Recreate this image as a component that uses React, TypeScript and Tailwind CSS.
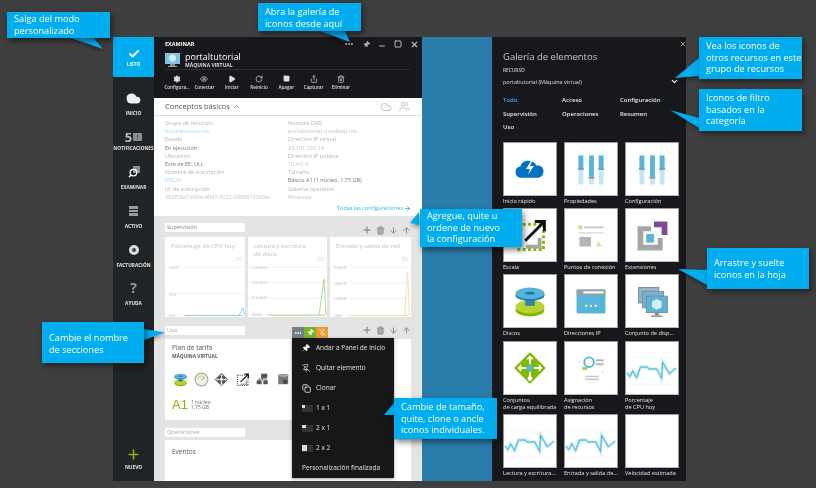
import React from "react";
import { Settings, Eye, Play, RotateCw, Square, Share, Trash2, Plus, ArrowDown, ArrowUp, Pin, PinOff, Copy, X, Minus, ChevronUp, ChevronDown, Check, ArrowRight, Users, Cloud, Search, MoreHorizontal } from "lucide-react";

const Spark = () => (
  <svg viewBox="0 0 54 54" className="w-full h-full">
    <line x1="0" y1="16" x2="54" y2="16" stroke="#eef3f5" strokeWidth="0.6" />
    <line x1="0" y1="44" x2="54" y2="44" stroke="#eef3f5" strokeWidth="0.6" />
    <polyline points="1,32 4,36 7,30 11,37 15,26 22,26 24,28 32,28 37,38 38,21 45,33 52,27" fill="none" stroke="#bfe8f5" strokeWidth="3" />
    <polyline points="1,32 4,36 7,30 11,37 15,26 22,26 24,28 32,28 37,38 38,21 45,33 52,27" fill="none" stroke="#3fb3d3" strokeWidth="1" />
  </svg>
);

const Quick = () => (
  <svg viewBox="0 0 54 54" className="w-full h-full">
    <path d="M18 36c-4 0-6-3-6-6s2-5 5-5.500c1-4 4-6 8-6 4 0 7 2 9 5 4-1 7 2 7 6 0 4-3 6.500-6 6.500z" fill="#0072c6" />
    <path d="M29 17l-6 10h4l-2 6 6-9h-4l3-7z" fill="#fff" />
  </svg>
);

const Sliders = () => (
  <svg viewBox="0 0 54 54" className="w-full h-full">
    {[[14, 26], [25, 35], [35, 26]].map(([x, h]) => (
      <g key={x}>
        <rect x={x} y="13" width="5" height="30" fill="#c4e6f5" />
        <rect x={x} y="13" width="5" height={h - 13} fill="#59b4d9" />
        <rect x={x - 0.5} y={h} width="6" height="2" fill="#8a9aa2" />
      </g>
    ))}
  </svg>
);

const ScaleIcon = ({ mono = false }: { mono?: boolean }) => (
  <svg viewBox="0 0 54 54" className="w-full h-full">
    <rect x="14" y="16" width="27" height="26" fill="none" stroke={mono ? "#555" : "#7fba00"} strokeWidth="3" strokeDasharray="3 2.500" />
    <path d="M37 30v9H23" fill="none" stroke="#a5a5a5" strokeWidth="4" />
    <path d="M22 33L42 13M32 13h10v10" fill="none" stroke="#111" strokeWidth="3" />
  </svg>
);

const Points = () => (
  <svg viewBox="0 0 54 54" className="w-full h-full">
    <rect x="14" y="17" width="4" height="4" fill="#c8dc96" />
    <rect x="20" y="18" width="20" height="2" fill="#c9c9c9" />
    <rect x="14" y="24" width="26" height="1.500" fill="#dddddd" />
    <rect x="15" y="29" width="12" height="10" fill="#b5b5b5" />
    <path d="M32 39l3-6 3 6z" fill="#d4e2a8" />
  </svg>
);

const Ext = () => (
  <svg viewBox="0 0 54 54" className="w-full h-full">
    <path d="M12 18h14v5h-8v14h15v-7h5v13H12z" fill="#a5a5a5" />
    <path d="M29 13h14v14h-6v-8h-8z" fill="#804998" />
    <rect x="21" y="26" width="8" height="9" fill="#59b4d9" />
  </svg>
);

const Disks = () => (
  <svg viewBox="0 0 54 54" className="w-full h-full">
    <ellipse cx="27" cy="36" rx="15" ry="7" fill="#7fba00" />
    <ellipse cx="27" cy="33" rx="15" ry="7" fill="#b8d432" />
    <rect x="22" y="22" width="10" height="10" fill="#3a7fb0" />
    <ellipse cx="27" cy="21" rx="15" ry="6" fill="#1f78b4" />
    <ellipse cx="27" cy="19" rx="15" ry="6" fill="#59b4d9" />
    <ellipse cx="27" cy="19" rx="5" ry="1.500" fill="#1f78b4" />
  </svg>
);

const IpWin = () => (
  <svg viewBox="0 0 54 54" className="w-full h-full">
    <rect x="12" y="15" width="30" height="25" rx="1.500" fill="#59b4d9" />
    <rect x="12" y="15" width="30" height="6" rx="1" fill="#a0a1a2" />
    <circle cx="15" cy="18" r="1.500" fill="#59b4d9" />
    <rect x="19" y="17" width="21" height="2" fill="#fff" />
    <circle cx="22" cy="32" r="1.200" fill="#fff" />
    <circle cx="27" cy="32" r="1.200" fill="#fff" />
    <circle cx="32" cy="32" r="1.200" fill="#fff" />
  </svg>
);

const Monitors = () => (
  <svg viewBox="0 0 54 54" className="w-full h-full">
    <rect x="13" y="13" width="21" height="16" fill="#8fb8cf" stroke="#8a8a8a" />
    <rect x="17" y="17" width="22" height="17" fill="#74b2d4" stroke="#8a8a8a" />
    <rect x="21" y="22" width="22" height="17" fill="#59b4d9" stroke="#8a8a8a" />
    <path d="M32 25l5 2.500v6l-5 2.500-5-2.500v-6z" fill="#d8eff8" />
    <rect x="30" y="39" width="4" height="3" fill="#8a8a8a" />
    <rect x="26" y="42" width="12" height="1.500" fill="#8a8a8a" />
  </svg>
);

const Diamond = ({ mono = false }: { mono?: boolean }) => (
  <svg viewBox="0 0 54 54" className="w-full h-full">
    <path d="M27 12l15 15-15 15-15-15z" fill={mono ? "#5a5a5a" : "#7fba00"} stroke={mono ? "#5a5a5a" : "#7fba00"} strokeWidth="2" strokeLinejoin="round" />
    <path d="M27 15v8M27 31v8M15 27h8M31 27h8" stroke="#fff" strokeWidth="2" />
    <path d="M24 18l3-3 3 3M18 24l-3 3 3 3M36 24l3 3-3 3" fill="none" stroke="#fff" strokeWidth="1.500" />
    <circle cx="27" cy="38" r="2.500" fill="#fff" />
    <circle cx="27" cy="27" r="3.500" fill={mono ? "#fff" : "#59b4d9"} />
  </svg>
);

const Assign = () => (
  <svg viewBox="0 0 54 54" className="w-full h-full">
    <circle cx="25" cy="21" r="5" fill="none" stroke="#59b4d9" strokeWidth="2" />
    <rect x="32" y="18" width="8" height="2" fill="#b5b5b5" />
    <rect x="32" y="22" width="8" height="2" fill="#b5b5b5" />
    <rect x="18" y="26" width="5" height="3" fill="#a5ce60" />
    <rect x="21" y="35" width="14" height="1.500" fill="#c5c5c5" />
    <rect x="21" y="38" width="14" height="1.500" fill="#c5c5c5" />
    <circle cx="15" cy="21" r="0.800" fill="#ccc" />
    <circle cx="39" cy="32" r="0.800" fill="#ccc" />
  </svg>
);

const Gauge = () => (
  <svg viewBox="0 0 54 54" className="w-full h-full">
    <circle cx="27" cy="27" r="23" fill="#f3f0e2" stroke="#a8a8a8" strokeWidth="4" />
    <path d="M14 27a13 13 0 0 1 26 0" fill="none" stroke="#c7d36c" strokeWidth="3" />
    <path d="M27 29l9-10" stroke="#555" strokeWidth="2" />
  </svg>
);

const Net = () => (
  <svg viewBox="0 0 54 54" className="w-full h-full">
    <rect x="22" y="6" width="22" height="16" fill="#555" />
    <rect x="6" y="30" width="18" height="14" fill="#555" />
    <rect x="30" y="30" width="16" height="14" fill="#555" />
    <path d="M27 22v8M14 30v-5h26v5" fill="none" stroke="#555" strokeWidth="3" />
  </svg>
);

const Db = () => (
  <svg viewBox="0 0 54 54" className="w-full h-full">
    <path d="M8 12c0-6 36-6 36 0v32H8z" fill="#777" />
    <ellipse cx="26" cy="13" rx="18" ry="5" fill="#a5a5a5" />
    <rect x="26" y="28" width="14" height="14" fill="#444" />
  </svg>
);

const Sizer = ({ n }: { n: number }) => (
  <svg width="11" height="7" viewBox="0 0 11 7">
    <rect x="0" y="0" width="11" height="7" fill="#333" />
    <rect x="0" y="0" width={n === 1 ? 3 : n === 2 ? 4 : 5} height={n === 3 ? 6 : 3} fill="#ddd" />
  </svg>
);

const gallery: { l: React.ReactNode; i: React.ReactNode }[] = [
  { l: "Inicio rápido", i: <Quick /> },
  { l: "Propiedades", i: <Sliders /> },
  { l: "Configuración", i: <Sliders /> },
  { l: "Escala", i: <ScaleIcon /> },
  { l: "Puntos de conexión", i: <Points /> },
  { l: "Extensiones", i: <Ext /> },
  { l: "Discos", i: <Disks /> },
  { l: "Direcciones IP", i: <IpWin /> },
  { l: "Conjunto de disp...", i: <Monitors /> },
  { l: <>Conjuntos<br />de carga equilibrada</>, i: <Diamond /> },
  { l: <>Asignación<br />de recursos</>, i: <Assign /> },
  { l: <>Porcentaje<br />de CPU hoy</>, i: <Spark /> },
  { l: "Lectura y escritura...", i: <Spark /> },
  { l: "Entrada y salida de...", i: <Spark /> },
  { l: "Velocidad estimada", i: null },
];

const commands = [
  { l: "Configura...", i: <Settings size={8} fill="#ddd" /> },
  { l: "Conectar", i: <Eye size={8} /> },
  { l: "Iniciar", i: <Play size={8} fill="#ddd" /> },
  { l: "Reinicio", i: <RotateCw size={8} /> },
  { l: "Apagar", i: <Square size={7} fill="#ddd" /> },
  { l: "Capturar", i: <Share size={8} /> },
  { l: "Eliminar", i: <Trash2 size={8} /> },
];

const left = [
  ["Grupo de recursos", "tutorialresources", "text-[#a9dcf3]"],
  ["Estado", "En ejecución", "text-[#777777]"],
  ["Ubicación", "Este de EE. UU.", "text-[#777777]"],
  ["Nombre de suscripción", "MSDN", "text-[#a9dcf3]"],
  ["Id. de suscripción", "562f08a7-696e-4847-9022-2806878360ac", "text-[#c4c4c4]"],
];
const right = [
  ["Nombre DNS", "portaltutorial.cloudapp.net", "text-[#c4c4c4]"],
  ["Dirección IP virtual", "23.101.135.19", "text-[#c4c4c4]"],
  ["Dirección IP pública", "10.4.0.4", "text-[#c4c4c4]"],
  ["Tamaño", "Básico A1 (1 núcleo, 1,75 GB)", "text-[#777777]"],
  ["Sistema operativo", "Windows", "text-[#c4c4c4]"],
];

const Details = ({ rows }: { rows: string[][] }) => (
  <div className="flex flex-col">
    {rows.map(([a, b, c]) => (
      <div key={a} className="flex flex-col">
        <div className="text-[5.5px] leading-[8.2px] text-[#b4b4b4] whitespace-nowrap">{a}</div>
        <div className={`text-[5.5px] leading-[8.2px] whitespace-nowrap ${c}`}>{b}</div>
      </div>
    ))}
  </div>
);

const SideItem = ({ h, icon, label, iconH = "h-[16px] mb-[2px]" }: { h: string; icon: React.ReactNode; label: string; iconH?: string }) => (
  <div className={`flex flex-col items-center justify-end shrink-0 ${h}`}>
    <div className={`flex items-center justify-center ${iconH}`}>{icon}</div>
    <div className="text-[4.8px] leading-[10px] font-bold text-[#e4e4e4] whitespace-nowrap">{label}</div>
  </div>
);

const SectionTools = () => (
  <div className="flex items-center gap-[4px] text-[#8a8a8a]">
    <Plus size={10} strokeWidth={3} />
    <Trash2 size={9} fill="#aaa" />
    <ArrowDown size={9} strokeWidth={2.5} />
    <ArrowUp size={9} strokeWidth={2.5} />
  </div>
);

const Input = ({ t, c = "text-[#9a9a9a]" }: { t: string; c?: string }) => (
  <div className={`w-[80px] h-[8.5px] bg-white pl-[2px] text-[5.5px] leading-[8.5px] ${c}`}>{t}</div>
);

const Chart = ({ title, labels, lines, spike, base }: { title: React.ReactNode; labels: string[]; lines: number[]; spike: string; base: string }) => (
  <div className="bg-white flex flex-col h-[80px] overflow-hidden">
    <div className="h-[18px] pt-[5px] pl-[6px] text-[6px] leading-[8px] text-[#c0c0c0]">{title}</div>
    <div className="h-[8px] pr-[3px] text-right text-[4.5px] leading-[8px] text-[#bde5f7]">EEI</div>
    <svg viewBox="0 0 80 54" className="w-full h-[54px]">
      {lines.map((y, k) => (
        <g key={y}>
          <line x1="0" x2="80" y1={y} y2={y} stroke="#eeeeee" strokeWidth="0.7" />
          <text x="4" y={y + 1.5} fontSize="4" fill="#c4c4c4" fontFamily="Open Sans, sans-serif">{labels[k]}</text>
        </g>
      ))}
      <line x1="20" x2="78" y1="52.500" y2="52.500" stroke={base} strokeWidth="0.8" />
      <polyline points={spike} fill="none" stroke={base} strokeWidth="0.8" />
    </svg>
  </div>
);

const Callout = ({ pos, children }: { pos: string; children: React.ReactNode }) => (
  <div className={`absolute ${pos} bg-[#00adef] text-white text-[9.2px] leading-[11.500px] pl-[7px] whitespace-nowrap shadow-[2px_3px_6px_rgba(0,0,0,0.5)]`}>
    {children}
  </div>
);

export default function App() {
  return (
    <div className="relative w-[816px] h-[488px] bg-[#3f3f3f] overflow-hidden pt-[37px] pl-[113px] font-['Open_Sans',sans-serif] blur-[0.4px]">
      <div className="flex w-[573px] h-[444px]">
        {/* sidebar */}
        <div className="w-[41px] bg-[#212426] flex flex-col shrink-0">
          <div className="h-[40px] bg-[#00adef] flex flex-col items-center justify-center shrink-0 pt-[2px]">
            <Check size={12} strokeWidth={4} className="text-white" />
            <div className="text-[4.8px] leading-[8px] font-bold text-white">LISTO</div>
          </div>
          <SideItem h="h-[41px]" label="INICIO" icon={<Cloud size={15} fill="#eee" className="text-[#eee]" />} />
          <SideItem
            h="h-[35px]"
            iconH="h-[12px]"
            label="NOTIFICACIONES"
            icon={
              <div className="flex items-center gap-[1px]">
                <span className="text-[13px] leading-[12px] font-bold text-[#bbbbbb]">5</span>
                <div className="w-[9px] h-[8px] bg-[#8e8e8e] rounded-[1px] text-[6px] leading-[8px] text-center font-bold text-[#333]">!</div>
              </div>
            }
          />
          <SideItem
            h="h-[39px]"
            label="EXAMINAR"
            icon={
              <div className="relative w-[12px] h-[12px]">
                <div className="absolute right-0 top-0 w-[7px] h-[7px] bg-[#8e8e8e]" />
                <Search size={10} strokeWidth={3} className="absolute left-0 bottom-0 text-white -scale-x-100" />
              </div>
            }
          />
          <SideItem
            h="h-[39px]"
            label="ACTIVO"
            icon={
              <div className="grid grid-cols-3 gap-[0.5px] w-[9px]">
                {[0, 1, 2, 3, 4, 5, 6, 7, 8].map((n) => (
                  <div key={n} className="h-[2.700px] bg-[#9a9a9a]" />
                ))}
              </div>
            }
          />
          <SideItem
            h="h-[39px]"
            label="FACTURACIÓN"
            icon={<div className="w-[10px] h-[10px] rounded-full border-[3px] border-[#dddddd] bg-[#444]" />}
          />
          <SideItem h="h-[38px]" label="AYUDA" icon={<span className="text-[14px] leading-[16px] font-bold text-[#9a9a9a]">?</span>} />
          <div className="flex-1" />
          <div className="pb-[9px] flex flex-col items-center">
            <Plus size={15} strokeWidth={2.5} className="text-[#7fba00]" />
            <div className="text-[4.8px] leading-[10px] font-bold text-[#e4e4e4]">NUEVO</div>
          </div>
        </div>

        {/* blade */}
        <div className="relative w-[268px] flex flex-col shrink-0 bg-[#e4e4e4]">
          <div className="h-[61px] bg-[#17181b] shrink-0 px-[11px] pt-[3px] flex flex-col text-white">
            <div className="flex items-center justify-between h-[8px]">
              <span className="text-[5.500px] leading-[8px] font-bold">EXAMINAR</span>
              <div className="flex items-center text-[#bbbbbb] -mr-[8px]">
                <MoreHorizontal size={10} strokeWidth={3} className="mr-[2px]" />
                <Pin size={7} fill="#bbb" className="ml-[7px] rotate-45" />
                <Minus size={8} strokeWidth={3} className="ml-[8px] mt-[3px]" />
                <Square size={8} strokeWidth={3} className="ml-[8px]" />
                <X size={9} strokeWidth={3} className="ml-[8px]" />
              </div>
            </div>
            <div className="flex items-center h-[18px] mt-[3px]">
              <svg width="15" height="15" viewBox="0 0 15 15">
                <rect x="0" y="0" width="15" height="11" fill="#7ec3e0" />
                <circle cx="7.500" cy="5" r="3.500" fill="#d6eef8" />
                <rect x="5" y="11" width="5" height="2" fill="#888" />
                <rect x="3" y="13" width="9" height="1" fill="#aaa" />
              </svg>
              <div className="ml-[5px] flex flex-col">
                <span className="text-[9px] leading-[11px]">portaltutorial</span>
                <span className="text-[5px] leading-[7px] font-bold text-[#dddddd]">MÁQUINA VIRTUAL</span>
              </div>
            </div>
            <div className="h-px bg-[#2c2d30] w-[245px]" />
            <div className="flex -ml-[1.500px] mt-[4px]">
              {commands.map((c) => (
                <div key={c.l} className="w-[27.300px] flex flex-col items-center text-[#dddddd]">
                  <div className="h-[9px] flex items-center">{c.i}</div>
                  <div className="text-[4.6px] leading-[8px] whitespace-nowrap font-semibold">{c.l}</div>
                </div>
              ))}
            </div>
          </div>

          <div className="h-[118px] bg-white shrink-0 flex flex-col">
            <div className="h-[18px] border-b border-[#dcdcdc] flex items-center pl-[11px] pr-[12px] shrink-0">
              <span className="text-[7.500px] text-[#555555]">Conceptos básicos</span>
              <ChevronUp size={9} className="ml-[2px] text-[#666]" />
              <div className="ml-auto flex items-center gap-[7px] text-[#8a8a8a]">
                <Cloud size={12} strokeWidth={1} />
                <Users size={11} strokeWidth={1} />
              </div>
            </div>
            <div className="grid grid-cols-[123px_1fr] pl-[11px] pt-[3px]">
              <Details rows={left} />
              <Details rows={right} />
            </div>
            <div className="flex items-center justify-end pr-[11px] mt-[3px] text-[#2cb6ee]">
              <span className="text-[5.500px] leading-[8px]">Todas las configuraciones</span>
              <ArrowRight size={7} strokeWidth={3} className="ml-[1px]" />
            </div>
          </div>

          <div className="flex-1 px-[11px] pt-[7px] flex flex-col overflow-hidden">
            <div className="h-[14px] flex justify-between items-start shrink-0">
              <Input t="Supervisión" c="text-[#888888]" />
              <div className="mt-[2px]"><SectionTools /></div>
            </div>
            <div className="grid grid-cols-[80px_79px_81px] gap-[3px] shrink-0">
              <Chart title="Porcentaje de CPU hoy" labels={["100%", "50%", "0%"]} lines={[4, 31, 52]} spike="74,52 78,45 80,52" base="#7fc4e4" />
              <Chart title={<>Lectura y escritura<br />de disco</>} labels={["1.0mB/S", "0.6mB/S", "0.3mB/S", "0kB/S"]} lines={[4, 19, 35, 52]} spike="72,52 77,16 79,52" base="#9ccb78" />
              <Chart title="Entrada y salida de red" labels={["600KB", "400KB", "200KB", "0kB"]} lines={[4, 20, 35, 52]} spike="74,52 77,9 79,52" base="#f3dc95" />
            </div>
            <div className="h-[13px] mt-[9px] flex items-start shrink-0">
              <Input t="Uso" c="text-[#aaaaaa]" />
              <div className="flex ml-[47px] mt-px">
                <div className="w-[12px] h-[11px] bg-[#71808a] flex items-center justify-center text-white"><MoreHorizontal size={8} strokeWidth={3} /></div>
                <div className="w-[12px] h-[11px] bg-[#72b626] flex items-center justify-center text-white"><Pin size={7} fill="#fff" className="rotate-45" /></div>
                <div className="w-[12px] h-[11px] bg-[#ee9a2a] flex items-center justify-center text-white"><PinOff size={7} /></div>
              </div>
              <div className="ml-auto mt-[-1px]"><SectionTools /></div>
            </div>
            <div className="h-[81px] bg-white shrink-0 pl-[7px] pt-[4px] flex flex-col">
              <div className="text-[6.500px] leading-[9px] text-[#555555]">Plan de tarifa</div>
              <div className="text-[4.800px] leading-[8px] font-bold text-[#555555]">MÁQUINA VIRTUAL</div>
              <div className="flex items-center gap-[5.500px] mt-[12px] pl-px">
                <div className="w-[15px] h-[15px] scale-[1.5]"><Disks /></div>
                <div className="w-[15px] h-[15px]"><Gauge /></div>
                <div className="w-[15px] h-[15px] scale-[1.5]"><Diamond mono /></div>
                <div className="w-[15px] h-[15px] scale-[1.4]"><ScaleIcon mono /></div>
                <div className="w-[15px] h-[15px]"><Net /></div>
                <div className="w-[15px] h-[15px]"><Db /></div>
              </div>
              <div className="flex items-center mt-[10px]">
                <span className="text-[13px] leading-[16px] text-[#7fba00] font-['Liberation_Sans',sans-serif]">A1</span>
                <div className="ml-[3px] flex flex-col text-[5px] leading-[5px] text-[#666666]">
                  <span>1 núcleo</span>
                  <span>1,75 GB</span>
                </div>
              </div>
            </div>
            <div className="h-[12px] mt-[8px] shrink-0"><Input t="Operaciones" c="text-[#aaaaaa]" /></div>
            <div className="flex-1 bg-white pl-[7px] pt-[7px] text-[6.500px] leading-[9px] text-[#555555]">Eventos</div>
          </div>

          <div className="absolute left-[138px] top-[301px] w-[102px] h-[140px] bg-[#171717] flex flex-col text-[#e0e0e0] text-[6.500px] pl-[10px] shadow-[0_1px_3px_rgba(0,0,0,0.4)]">
            {[
              { i: <Pin size={8} fill="#fff" className="text-white rotate-45" />, t: "Andar a Panel de inicio" },
              { i: <PinOff size={8} className="text-white" />, t: "Quitar elemento" },
              { i: <Copy size={9} className="text-white" />, t: "Clonar" },
              { i: <Sizer n={1} />, t: "1 x 1" },
              { i: <Sizer n={2} />, t: "2 x 1" },
              { i: <Sizer n={3} />, t: "2 x 2" },
            ].map((m) => (
              <div key={m.t} className="flex items-center h-[20px]">
                <div className="w-[14px]">{m.i}</div>
                <span className="whitespace-nowrap">{m.t}</span>
              </div>
            ))}
            <div className="h-[20px] flex items-center whitespace-nowrap">Personalización finalizada</div>
          </div>
        </div>

        <div className="w-[70px] bg-[#2a7dab] shrink-0" />

        {/* gallery */}
        <div className="relative w-[194px] bg-[#17181b] shrink-0 pl-[11px] pr-[8px] pt-[14px] flex flex-col text-white overflow-hidden">
          <X size={8} strokeWidth={3} className="absolute right-[-1px] top-[3px] text-[#999]" />
          <div className="text-[9.500px] leading-[12px] text-[#c8c8c8]">Galería de elementos</div>
          <div className="text-[4.800px] leading-[8px] mt-[3px] font-semibold text-[#cccccc]">RECURSO</div>
          <div className="flex items-center justify-between text-[5.500px] leading-[8px] mt-[3px] text-[#dddddd]">
            <span>portaltutorial (Máquina virtual)</span>
            <ChevronDown size={9} strokeWidth={3} className="text-white mr-[-1px]" />
          </div>
          <div className="grid grid-cols-[59px_58px_1fr] mt-[8px] text-[6px] leading-[13.500px] font-semibold text-[#e8e8e8]">
            <span className="text-[#2cb6ee]">Todo</span>
            <span>Acceso</span>
            <span>Configuración</span>
            <span>Supervisión</span>
            <span>Operaciones</span>
            <span>Resumen</span>
            <span>Uso</span>
          </div>
          <div className="grid grid-cols-[54px_54px_54px] gap-x-[7px] mt-[7px] items-start">
            {gallery.map((g, k) => (
              <div key={k} className={`flex flex-col ${k >= 9 && k < 12 ? "h-[73px]" : k >= 6 && k < 9 ? "h-[67px]" : "h-[66px]"}`}>
                <div className="w-[54px] h-[54px] bg-white border border-[#9a9a9a] border-b-[#bbb] shrink-0">{g.i}</div>
                <div className="text-[5.600px] leading-[7px] mt-[2px] font-medium text-[#e4e4e4] whitespace-nowrap">{g.l}</div>
              </div>
            ))}
          </div>
        </div>
      </div>

      {/* callout tails */}
      <svg className="absolute left-0 top-0 w-[816px] h-[488px] pointer-events-none drop-shadow-[1px_2px_2px_rgba(0,0,0,0.4)]" viewBox="0 0 816 488">
        <polygon points="68,37 93,37 103,49" fill="#00adef" />
        <polygon points="320,31 345,31 350,42" fill="#00adef" />
        <polygon points="419,212 410,223 419,225" fill="#00adef" />
        <polygon points="144,329 165,332.500 144,340" fill="#00adef" />
        <polygon points="394,403 384,415 394,415" fill="#00adef" />
        <polygon points="699,58 675,78 699,76" fill="#00adef" />
        <polygon points="699,118 670,110 699,128" fill="#00adef" />
        <polygon points="707,270 678,269 707,285" fill="#00adef" />
      </svg>

      <Callout pos="left-[7px] top-[12px] w-[103px] h-[26px] pt-[1px]">Salga del modo<br />personalizado</Callout>
      <Callout pos="left-[258px] top-[3px] w-[103px] h-[28px] pt-[3px]">Abra la galería de<br />iconos desde aquí</Callout>
      <Callout pos="left-[420px] top-[209px] w-[102px] h-[38px] pt-[1px]">Agregue, quite u<br />ordene de nuevo<br />la configuración</Callout>
      <Callout pos="left-[42px] top-[322px] w-[102px] h-[41px] pt-[10px]">Cambie el nombre<br />de secciones</Callout>
      <Callout pos="left-[394px] top-[398px] w-[103px] h-[41px] pt-[3px]">Cambie de tamaño,<br />quite, clone o ancle<br />iconos individuales.</Callout>
      <Callout pos="left-[699px] top-[37px] w-[103px] h-[42px] pt-[3px]">Vea los iconos de<br />otros recursos en este<br />grupo de recursos</Callout>
      <Callout pos="left-[699px] top-[89px] w-[103px] h-[42px] pt-[3px]">Iconos de filtro<br />basados en la<br />categoría</Callout>
      <Callout pos="left-[707px] top-[248px] w-[102px] h-[41px] pt-[9px]">Arrastre y suelte<br />iconos en la hoja</Callout>
    </div>
  );
}
